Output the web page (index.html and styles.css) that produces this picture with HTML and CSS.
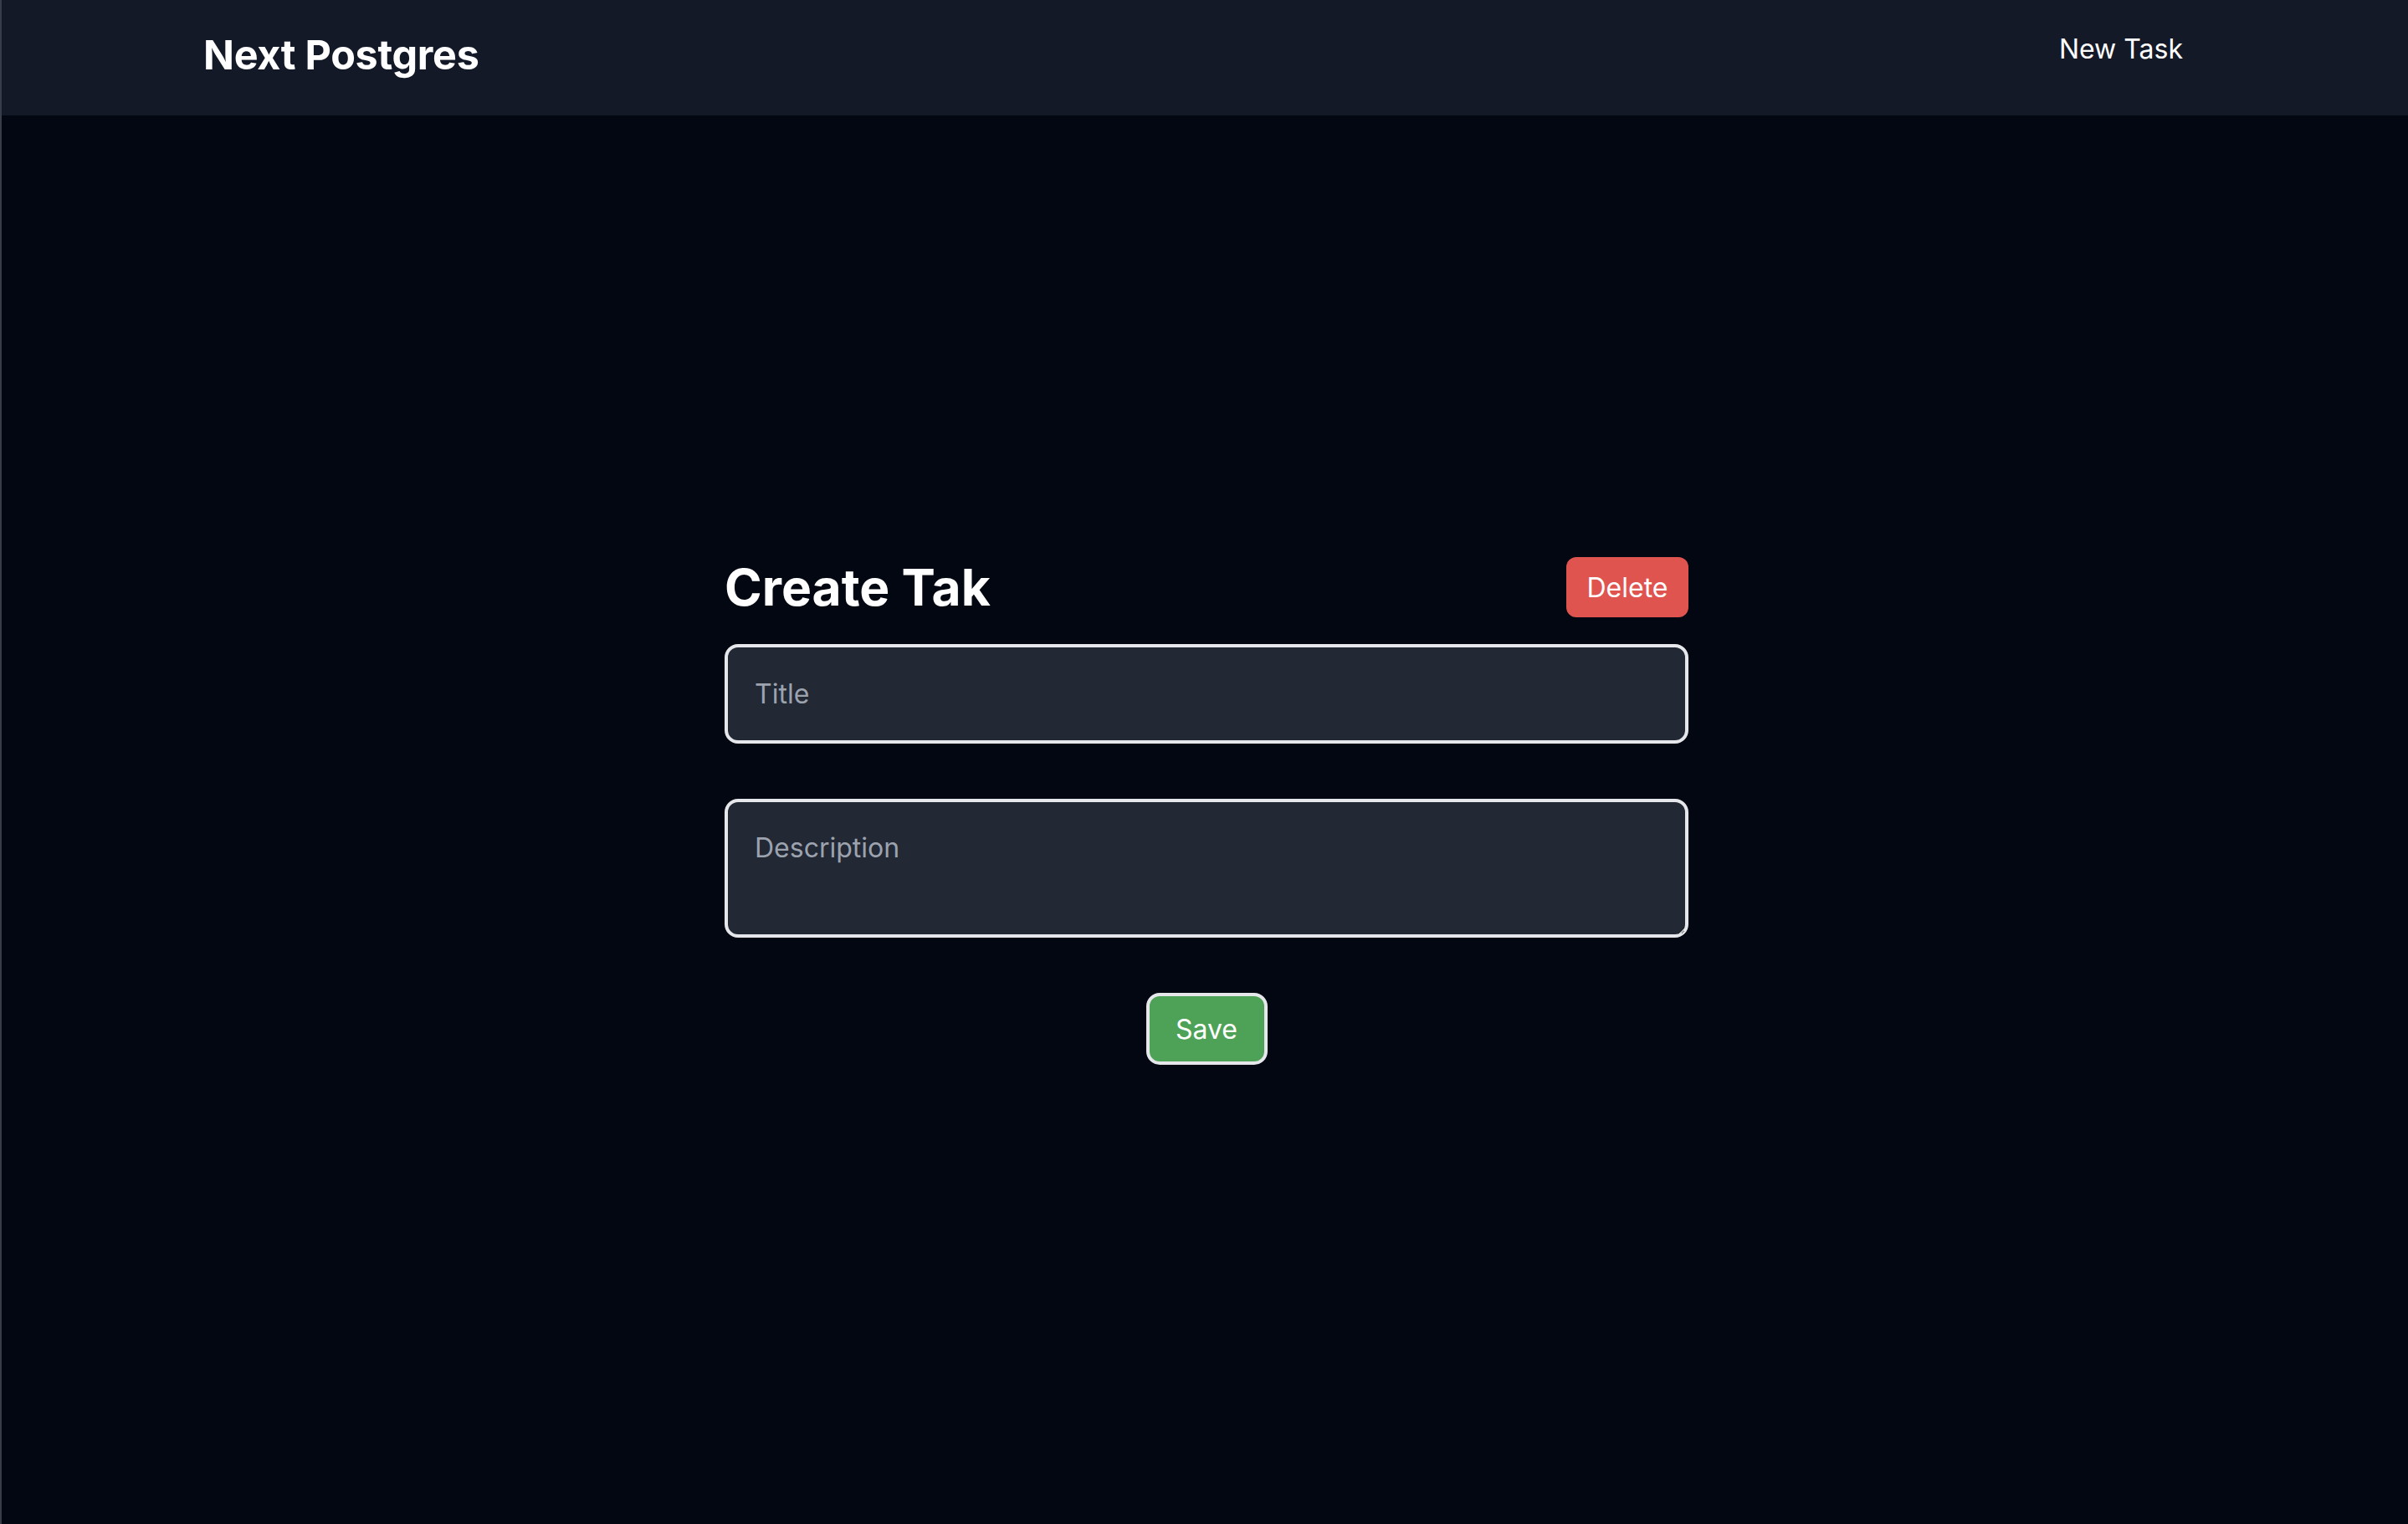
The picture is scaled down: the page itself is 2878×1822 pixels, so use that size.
FILE: index.html
```html
<!DOCTYPE html>
<html lang="en">
<head>
<meta charset="utf-8">
<title>Next Postgres</title>
<link rel="stylesheet" href="styles.css">
</head>
<body>
<div class="frame">
  <nav class="nav">
    <a class="logo" href="#">Next Postgres</a>
    <a class="nav-link" href="#">New Task</a>
  </nav>
  <main class="main">
    <form class="form">
      <div class="form-head">
        <h1 class="title">Create Tak</h1>
        <button type="button" class="btn btn-delete">Delete</button>
      </div>
      <input class="field field-input" type="text" placeholder="Title">
      <textarea class="field field-area" placeholder="Description"></textarea>
      <div class="actions">
        <button type="button" class="btn btn-save">Save</button>
      </div>
    </form>
  </main>
</div>
</body>
</html>
```

FILE: styles.css
```css
* { box-sizing: border-box; }
html, body { margin: 0; padding: 0; }
body {
  background: #030712;
  font-family: Inter, "Noto Sans", sans-serif;
  color: #ffffff;
  height: 1822px;
  overflow: hidden;
}
.frame {
  border-left: 2px solid #393d49;
  height: 100%;
  display: flex;
  flex-direction: column;
}
.nav {
  height: 138px;
  background: #131927;
  display: flex;
  justify-content: space-between;
  align-items: flex-start;
  padding: 0 269px 0 241px;
}
.logo {
  color: #fff;
  text-decoration: none;
  font-weight: 700;
  font-size: 48.5px;
  line-height: 1;
  margin-top: 42px;
  letter-spacing: -0.3px;
}
.nav-link {
  color: #fff;
  text-decoration: none;
  font-size: 32px;
  line-height: 1;
  margin-top: 43px;
}
.main {
  flex: 1;
  display: flex;
  justify-content: center;
  padding-top: 528px;
  padding-left: 4px;
}
.form {
  width: 1152px;
  display: flex;
  flex-direction: column;
}
.form-head {
  display: flex;
  justify-content: space-between;
  align-items: center;
  height: 72px;
  margin-bottom: 32px;
}
.title {
  margin: 0;
  font-size: 60.5px;
  font-weight: 700;
  line-height: 1;
}
.btn {
  font-family: Inter, "Noto Sans", sans-serif;
  font-size: 32px;
  color: #fff;
  cursor: pointer;
}
.btn-delete {
  width: 146px;
  height: 72px;
  border: none;
  border-radius: 12px;
  background: #e05450;
  padding: 0;
}
.field {
  width: 100%;
  background: #222834;
  border: 4px solid #e5e7eb;
  border-radius: 16px;
  color: #fff;
  font-family: Inter, "Noto Sans", sans-serif;
  font-size: 32px;
  padding: 0 32px;
  outline: none;
}
.field::placeholder { color: #9ca3af; }
.field-input {
  height: 119px;
  margin-bottom: 66px;
}
.field-area {
  height: 166px;
  padding-top: 35px;
  resize: vertical;
  display: block;
}
.actions {
  display: flex;
  justify-content: center;
  margin-top: 66px;
}
.btn-save {
  width: 145px;
  height: 86px;
  border: 4px solid #e5e7eb;
  border-radius: 16px;
  background: #4ea257;
  padding: 0;
}
```
